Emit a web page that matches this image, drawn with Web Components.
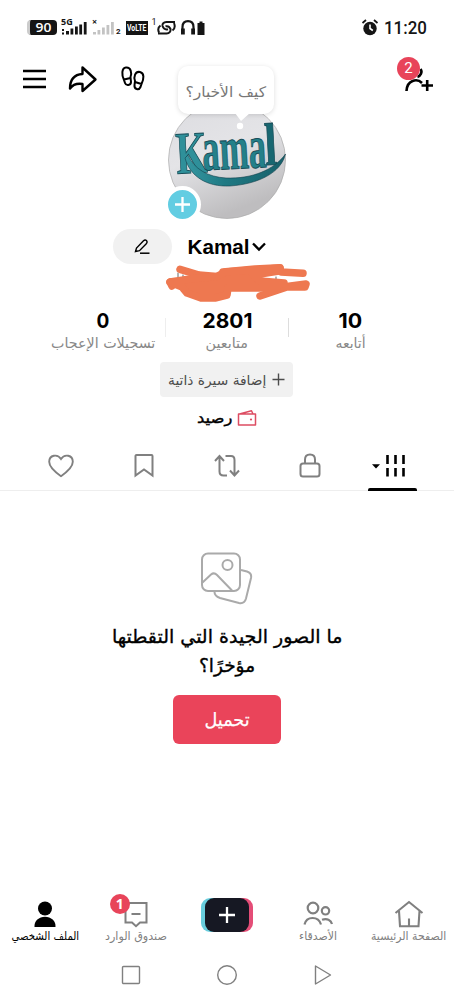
<!DOCTYPE html>
<html lang="ar">
<head>
<meta charset="utf-8">
<title>Kamal</title>
<style>
body{margin:0;background:#fff;font-family:"DejaVu Sans",sans-serif}
</style>
</head>
<body>
<profile-app></profile-app>
<script>
const define=(name,html,init)=>customElements.define(name,class extends HTMLElement{
  connectedCallback(){
    if(this.shadowRoot)return;
    this.attachShadow({mode:'open'}).innerHTML=typeof html==='function'?html(this):html;
    if(init)init(this);
  }
});

define('fit-text',el=>`<style>
:host{display:inline-flex;justify-content:center;direction:ltr;width:${el.getAttribute('w')}px;white-space:nowrap;flex:none}
span{display:block;flex:none;transform-origin:center}
</style><span dir="auto"><slot></slot></span>`,el=>{
  const s=el.shadowRoot.querySelector('span');
  const n=s.offsetWidth;
  if(n)s.style.transform=`scaleX(${Number(el.getAttribute('w'))/n})`;
});

const icons={
menu:[26,22,'<path d="M1 3h23M1 11h23M1 19h23" stroke-width="2.300"/>'],
share:[30,28,'<path d="M14.500 2.500 27.500 14.500 14.500 26V19C8 18 4.500 20 2 23.500C2 14 7 9.500 14.500 9Z" stroke-width="2.400" stroke-linejoin="round"/>'],
steps:[26,28,'<g stroke-width="2"><path d="M4 15C1.500 10 1.500 3 6 2.500C11 2 12 8 10.500 12L11 17C11 20.500 6 21 5 18ZM4 14.500 10.500 13"/><path d="M21.500 19C24 14 24.500 8 20 7C15 6 13.500 12 15 16L14.500 20C14 24.500 19 25.500 20.500 22ZM15 17 21.500 19"/></g>'],
adduser:[32,30,'<path d="M17.500 5C20 8 17 12.500 14.500 13M3.500 27C4 16 14 14 19 19" stroke-width="2.600"/><path d="M18.500 21.500h11.500M24.200 16v11" stroke-width="2.600"/>'],
edit:[18,18,'<path d="M2.500 13.500 3.500 10 10.500 2.700Q12 1.300 13.500 2.500Q14.800 4 13.500 5.500L6.500 12.700Z" stroke-width="1.400"/><path d="M7 15.200h9.500" stroke-width="1.500"/>'],
chevron:[16,12,'<path d="m2 2.500 6 6 6-6" stroke-width="2.300"/>'],
plus:[13,13,'<path d="M.5 6.500h12M6.500 .5v12" stroke-width="1.400"/>'],
wallet:[20,18,'<path d="M1.500 5h17v11h-17ZM2.500 5 14.500 1.800 16 5" stroke-width="1.500" stroke-linejoin="round"/><circle cx="14" cy="10.500" r="1.100" fill="currentColor" stroke="none"/>'],
heart:[28,26,'<path d="M14 23.200C8 19 2.200 14 2.200 8.800C2.200 2 10.500 .5 14 6C17.500 .5 25.800 2 25.800 8.800C25.800 14 20 19 14 23.200Z" stroke-width="1.900"/>'],
bookmark:[20,26,'<path d="M2.500 2h15a1 1 0 0 1 1 1v19.500L10 16.500 1.500 22.500V3a1 1 0 0 1 1-1Z" stroke-width="2"/>'],
repost:[28,26,'<path d="M6.500 3.500V18.500Q6.500 22.500 10.500 22.500H14M2 8l4.500-5L11 8M12.500 3H18Q21.500 3 21.500 7V22M17 17.500l4.500 5 4.500-5" stroke-width="2"/>'],
lock:[22,26,'<rect x="1.500" y="10.500" width="19" height="13" rx="2.500" stroke-width="2"/><path d="M6 10V6.500Q6 1.500 11 1.500T16 6.500V10" stroke-width="2"/>'],
grid:[36,24,'<path d="M2 10.200h8L6 14.500Z" fill="currentColor" stroke="none"/><path d="M17.500 1v9M25.500 1v9M33.500 1v9M17.500 14v8.500M25.500 14v8.500M33.500 14v8.500" stroke-width="2.600"/>'],
photos:[53,56,'<rect x="2" y="2.500" width="38" height="37.500" rx="6" stroke-width="2"/><circle cx="27.500" cy="14" r="5" stroke-width="2"/><path d="M2.500 31.500 11 23.500Q14 21 17 24L32 39.500M41 19 47 20.500Q52 22 51 27L46 47.500Q44.500 53 39 52L20 47Q14.500 45 14.500 41" stroke-width="2"/>'],
person:[24,27,'<g fill="currentColor" stroke="none"><circle cx="12" cy="7.500" r="7"/><path d="M1.500 26C1 20 6 15.800 12 15.800S23 20 22.500 26Z"/></g>'],
inbox:[26,28,'<path d="M2.500 3H23.500V22.500H17L13 26.200 9 22.500H2.500ZM8.500 14h9" stroke-width="2"/>'],
friends:[32,26,'<g stroke-width="2.200"><circle cx="11" cy="7" r="5.300"/><circle cx="23.500" cy="9.800" r="3.700"/><path d="M2.500 23.500C4.500 14.800 16.500 14.800 19 23.500M20 18.800C25 17 29 19 30 23"/></g>'],
home:[32,30,'<path d="M2.500 14 16 3 29.500 14M6 12 7 27.300H25.500L26.500 12M16 19.500v7.500" stroke-width="2.100"/>'],
square:[20,20,'<rect x="1.500" y="1.500" width="17" height="17" rx="1" stroke-width="1.400"/>'],
circle:[22,22,'<circle cx="11" cy="11" r="9.300" stroke-width="1.400"/>'],
triangle:[20,22,'<path d="M2.500 2 17.500 11 2.500 20Z" stroke-width="1.400" stroke-linejoin="round"/>'],
alarm:[18,18,'<circle cx="9" cy="9.500" r="6.700" fill="currentColor" stroke="none"/><path d="m1.500 4 3.500-3M16.500 4 13 1" stroke-width="1.800"/><path d="M9 5.500v4l2.800 2" stroke="#fff" stroke-width="1.600"/>'],
signal:[27,16,'<g fill="currentColor" stroke="none"><path d="M1 9h2v2H1zM1 12.500h2v2H1zM5 11h3v3.500H5zM9.500 8.500h2.800v6H9.500zM14 6.500h2.800v8H14zM18.300 4.500h2.800v10h-2.800zM22.800 2h2.800v12.500h-2.800z"/></g>'],
signal2:[24,16,'<g fill="#c3c3c3" stroke="none"><path d="M1 12h3v2.500H1zM5.500 10h2.800v4.500H5.500zM10 7.500h2.800v7H10zM14.500 5h2.800v9.500h-2.800zM19 2h2.800v12.500H19z"/></g>'],
link:[21,18,'<path d="M19 3H10.500Q6 3.500 6.500 7Q8 11.300 12 10.200" stroke-width="2"/><path d="M2 14.500H10.500Q15 14 14.500 10Q13 6.500 9.500 7.300M4.500 6.500Q1 9 3 13.500M16.500 11.500Q20 9 18 4" stroke-width="2"/>'],
phones:[25,18,'<path d="M2.500 13V8Q2.500 2.200 8 2.200T13.500 8V13" stroke-width="2.200"/><path d="M1 9.500h3.800v6H1zM11.200 9.500H15v6h-3.800zM17.500 4h2v-1.500h3V4h2v12h-7z" fill="currentColor" stroke="none"/>']
};
define('ui-icon',el=>{
  const [w,h,p]=icons[el.getAttribute('name')];
  return `<style>:host{display:inline-block;flex:none;width:${w}px;height:${h}px}svg{display:block}</style><svg width="${w}" height="${h}" viewBox="0 0 ${w} ${h}" fill="none" stroke="currentColor">${p}</svg>`;
});

define('count-badge',`<style>:host{display:flex;align-items:center;justify-content:center;box-sizing:border-box;border-radius:50%;background:#e8445a;color:#fff;font-family:Roboto,sans-serif;line-height:1}</style><slot></slot>`);

define('status-bar',`<style>
:host{display:flex;justify-content:space-between;height:55px;padding:0 27px 0 26px;color:#151515;font-family:Roboto,sans-serif}
div{display:flex;align-items:center}
.bat{width:30px;height:15px;margin-left:1px;border-radius:4px;background:#151515;color:#fff;font:600 13px/15px "Open Sans",sans-serif;justify-content:center;border-left:3px solid #ccc;box-sizing:border-box}
.sig{display:grid;align-items:end;margin-left:4px}.sig>*{grid-area:1/1}
.sig b{font:700 9px/9px "Open Sans",sans-serif;align-self:start;margin-top:-3px}
.sub{font:700 8px/8px Roboto,sans-serif;align-self:flex-end;margin-bottom:19px}
.volte{width:22px;height:14px;background:#151515;color:#fff;font:700 9px/14px Roboto,sans-serif;justify-content:center;margin:0 4px 0 5px}
.one{font-size:9px;margin-bottom:11px}
.time{gap:5px;font-size:18.500px;font-weight:500}
</style>
<div><div class="bat"><fit-text w="16">90</fit-text></div>
<div class="sig"><ui-icon name="signal"></ui-icon><b>5G</b></div>
<div class="sig" style="margin-left:4px"><ui-icon name="signal2"></ui-icon><b>×</b></div><span class="sub">2</span>
<div class="volte"><fit-text w="19">VoLTE</fit-text></div><span class="one">1</span><ui-icon name="link" style="margin-left:-1px"></ui-icon><ui-icon name="phones" style="margin-left:3px"></ui-icon></div>
<div class="time"><ui-icon name="alarm"></ui-icon><fit-text w="43">11:20</fit-text></div>`);

define('top-bar',`<style>
:host{display:flex;justify-content:space-between;align-items:center;height:46px;padding:0 19px 0 22px;color:#000}
div{display:flex;align-items:center;padding-top:1px}.user{position:relative}
count-badge{position:absolute;width:23px;height:23px;left:-6px;top:-6px;font-size:15px}
</style><div><ui-icon name="menu"></ui-icon><ui-icon name="share" style="margin-left:20px"></ui-icon><ui-icon name="steps" style="margin-left:22px"></ui-icon></div>
<div class="user"><ui-icon name="adduser"></ui-icon><count-badge>2</count-badge></div>`);

define('profile-avatar',`<style>
:host{display:block;position:relative;width:118px;height:118px;margin:0 auto}
svg{display:block;overflow:visible}
.bubble{position:absolute;left:10px;top:-35px;width:96px;height:48px;border-radius:10px;background:#fff;box-shadow:0 1px 5px #0002;display:flex;align-items:center;justify-content:center;color:#777;font-size:14.500px;padding-top:3px;box-sizing:border-box}
.add{position:absolute;left:-4px;top:85px;width:29px;height:29px;border:4px solid #fff;border-radius:50%;background:#62cde2;color:#fff;display:flex;align-items:center;justify-content:center;z-index:2}
.tail{position:absolute;left:67px;top:11px;width:15px;height:18px;z-index:2}
</style>
<svg width="118" height="118" viewBox="0 0 118 118">
<defs><linearGradient id="g" x1="0" y1="0" x2=".4" y2="1"><stop stop-color="#dcdce0"/><stop offset=".5" stop-color="#e4e4e7"/><stop offset="1" stop-color="#bebdbf"/></linearGradient>
<linearGradient id="t" x1="0" x2="1"><stop stop-color="#3597a1"/><stop offset=".4" stop-color="#1f7983"/><stop offset="1" stop-color="#17606a"/></linearGradient></defs>
<circle cx="59" cy="59" r="58.500" fill="url(#g)" stroke="#aaa" stroke-width=".7"/>
<g fill="#23808a" stroke="#174e59" stroke-width="1" font-family="Liberation Serif,serif" font-weight="700" transform="rotate(-3 60 50)">
<text x="8" y="70" font-size="60" textLength="31" lengthAdjust="spacingAndGlyphs" fill="#2f909a">K</text>
<text x="34" y="68" font-size="62" textLength="64" lengthAdjust="spacingAndGlyphs">ama</text>
<text x="97" y="66" font-size="60" textLength="12" lengthAdjust="spacingAndGlyphs" fill="#186771">l</text></g>
<path d="M20 54C26 68 40 76 58 77C84 78 106 69 117.500 53C113 72 90 83 62 85C38 86 22 75 17 57Z" fill="url(#t)" stroke="#123f4c" stroke-width=".6"/>
</svg>
<div class="bubble"><fit-text w="81">كيف الأخبار؟</fit-text></div>
<svg class="tail" viewBox="0 0 15 18"><path d="M0 1h15L6 9Z" fill="#fff"/><circle cx="5" cy="14" r="3.200" fill="#fff"/></svg>
<div class="add"><svg width="17" height="17"><path d="M1 8.500h15M8.500 1v15" stroke="#fff" stroke-width="2.300"/></svg></div>`);

define('name-row',`<style>
:host{display:flex;align-items:center;height:35px;margin-top:10px;padding-left:113px;color:#000;font:700 21px "Liberation Sans",sans-serif}
.pill{width:59px;height:35px;border-radius:18px;background:#f1f1f1;display:flex;align-items:center;justify-content:center;margin-right:16px}
</style><div class="pill"><ui-icon name="edit" style="margin-right:2px"></ui-icon></div><fit-text w="62">Kamal</fit-text><ui-icon name="chevron" style="margin-left:1px"></ui-icon>`);

define('hidden-handle',`<style>:host{display:block;height:40px;margin:-1px 0 0 165px}svg{display:block}</style>
<svg width="146" height="40" viewBox="0 0 146 40" stroke-linecap="round" stroke-linejoin="round"><path d="M13 10v6M18 12v4M24 14l3-3M92 15l10 3M101 16l-3 4M111 14v7" stroke="#666" fill="none"/>
<g stroke="#ee7850" stroke-width="7.500" fill="none"><path d="M15 6.300 34 12 52 13.500M58 9 90 6 115 4.700 116 9 138 10.300M5 19 7 23M95 33 122 24 140 24 141 21 118 24" />
<path d="M25 16 52 13.500 60 9 115 5 114 8 88 12 95 18 119 20 110 25 63 25 62 32 50 35 36 35 22 30 17 24 5 19Z" fill="#ee7850"/></g></svg>`);

define('profile-stat',el=>`<style>
:host{display:flex;flex-direction:column;align-items:center;width:${el.getAttribute('width')}px;height:50px}
b{font:700 20.500px/24px Inter,"Liberation Sans",sans-serif;color:#000;height:24px}
small{font-size:14px;line-height:20px;color:#888}
</style><b><fit-text w="${el.getAttribute('nw')}">${el.getAttribute('count')}</fit-text></b><small><fit-text w="${el.getAttribute('lw')}"><slot></slot></fit-text></small>`);

define('stats-row',`<style>:host{display:flex;padding:6px 0 0 41px;height:51px}i{width:1px;height:19px;margin-top:9px;background:#ddd;flex:none}</style>
<profile-stat width="124" count="0" nw="13" lw="104">تسجيلات الإعجاب</profile-stat><i style="background:#eee"></i><profile-stat width="122" count="2801" nw="50" lw="43">متابعين</profile-stat><i></i><profile-stat width="123" count="10" nw="24" lw="30">أتابعه</profile-stat>`);

define('bio-actions',`<style>
:host{display:flex;flex-direction:column;align-items:center;padding-top:2px}
.bio{width:133px;height:35px;border-radius:4px;background:#f1f1f1;color:#4c4c4c;display:flex;align-items:center;justify-content:center;gap:6px;font-size:13.500px;margin-right:1px}
.wallet{display:flex;align-items:center;gap:4px;height:24px;margin-top:9px;color:#000;font-size:14.500px;-webkit-text-stroke:.4px #000}
</style><div class="bio"><fit-text w="98">إضافة سيرة ذاتية</fit-text><ui-icon name="plus"></ui-icon></div>
<div class="wallet"><fit-text w="35">رصيد</fit-text><ui-icon name="wallet" style="color:#dd4c62"></ui-icon></div>`);

define('profile-tabs',`<style>
:host{display:grid;grid-template-columns:repeat(5,83px);padding-left:19px;height:49px;margin-top:11px;border-bottom:1px solid #eee;color:#808080}
div{display:flex;align-items:center;justify-content:center;padding-top:1px}
.on{color:#000;position:relative}
.on::after{content:"";position:absolute;left:17px;bottom:-1px;width:49px;height:3px;border-radius:2px 2px 0 0;background:#000}
</style><div><ui-icon name="heart"></ui-icon></div><div><ui-icon name="bookmark"></ui-icon></div><div><ui-icon name="repost"></ui-icon></div><div><ui-icon name="lock"></ui-icon></div><div class="on"><ui-icon name="grid" style="margin-right:10px"></ui-icon></div>`);

define('empty-state',`<style>
:host{display:flex;flex-direction:column;align-items:center;padding-top:60px;color:#000;flex:1}
ui-icon{color:#aaa;margin-right:2px}
h2{margin:15px 0 0;display:flex;flex-direction:column;align-items:center;font-size:18.500px;line-height:29px;font-weight:400;-webkit-text-stroke:.35px #000}
button{margin:15px 0 0;width:108px;height:49px;border:0;border-radius:6px;background:#ea445a;color:#fff;font:400 18px "DejaVu Sans",sans-serif;-webkit-text-stroke:.25px #fff;padding:0}
</style><ui-icon name="photos"></ui-icon><h2><fit-text w="231">ما الصور الجيدة التي التقطتها</fit-text><fit-text w="56">مؤخرًا؟</fit-text></h2><button><fit-text w="45">تحميل</fit-text></button>`);

define('nav-item',el=>`<style>
:host{display:flex;flex-direction:column;align-items:center;position:relative;width:91px;color:#808080;font-size:11.500px;line-height:16px}
.i{height:28px;display:flex;align-items:center}
count-badge{position:absolute;width:20px;height:20px;left:19px;top:-6px;font:700 14px/20px "Open Sans",sans-serif}
</style><div class="i"><ui-icon name="${el.getAttribute('icon')}"></ui-icon></div><fit-text w="${el.getAttribute('w')}"><slot></slot></fit-text>${el.hasAttribute('badge')?`<count-badge>${el.getAttribute('badge')}</count-badge>`:''}`);

define('bottom-nav',`<style>
:host{display:flex;height:50px}
.create{width:91px;display:flex;justify-content:center}
.box{width:44px;height:34px;box-sizing:border-box;border-radius:9px;background:#161823;box-shadow:-4px 0 #68cddd,4px 0 #e44d77;display:flex;align-items:center;justify-content:center;margin-top:-2px}
</style><nav-item icon="person" w="68" style="color:#000">الملف الشخصي</nav-item><nav-item icon="inbox" w="62" badge="1">صندوق الوارد</nav-item>
<div class="create"><div class="box"><svg width="18" height="18"><path d="M1 9h16M9 1v16" stroke="#fff" stroke-width="2.300"/></svg></div></div>
<nav-item icon="friends" w="38">الأصدقاء</nav-item><nav-item icon="home" w="75">الصفحة الرئيسية</nav-item>`);

define('system-nav',`<style>:host{display:flex;align-items:center;justify-content:center;gap:75px;height:50px;color:#808080}</style>
<ui-icon name="square"></ui-icon><ui-icon name="circle"></ui-icon><ui-icon name="triangle"></ui-icon>`);

define('profile-app',`<style>:host{display:flex;flex-direction:column;width:454px;height:1000px;overflow:hidden;background:#fff}</style>
<status-bar></status-bar><top-bar></top-bar><profile-avatar></profile-avatar><name-row></name-row><hidden-handle></hidden-handle><stats-row></stats-row><bio-actions></bio-actions><profile-tabs></profile-tabs><empty-state></empty-state><bottom-nav></bottom-nav><system-nav></system-nav>`);
</script>
</body>
</html>
